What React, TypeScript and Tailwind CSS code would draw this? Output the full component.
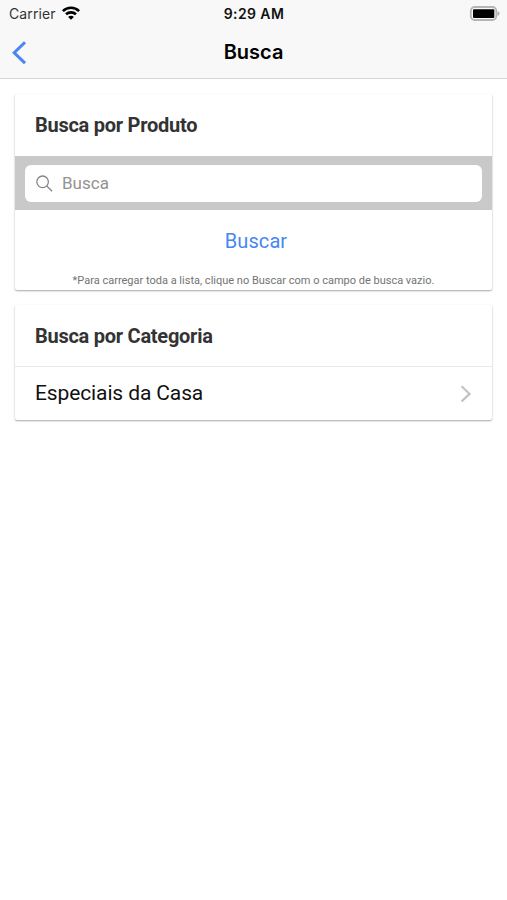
import React from "react";

function StatusBar() {
  return (
    <div className="grid h-7 grid-cols-3 items-center pl-[9px] pr-[7px] font-[Inter,sans-serif]">
      <div className="flex items-center gap-[6px]">
        <span className="text-[14px] leading-7 tracking-[0.1px] text-[#333]">Carrier</span>
        <svg width="18" height="14" viewBox="0 0 18 14" className="-mt-[2px]" fill="none" stroke="#000" strokeWidth="2.6">
          <path d="M0.9 5.1C5.4 0.7 12.6 0.7 17.1 5.1" />
          <path d="M4 8.3C6.8 5.7 11.2 5.7 14 8.3" />
          <path d="M9 13.8 6.1 10.9C7.7 9.4 10.3 9.4 11.9 10.9Z" fill="#000" stroke="none" />
        </svg>
      </div>
      <span className="-ml-px text-center text-[14px] font-semibold leading-7 tracking-[0.4px] text-[#111]">9:29 AM</span>
      <svg width="31" height="16" viewBox="0 0 31 16" className="-mt-px justify-self-end">
        <rect x="1.8" y="1" width="25.5" height="13" rx="4" fill="#f8f8f8" stroke="#b5b5b5" strokeWidth="1.8" />
        <rect x="4" y="3.2" width="21.3" height="8.8" rx="1" fill="#000" />
        <path d="M28.5 5.2C31.2 6 31.2 9 28.5 9.8Z" fill="#aaa" />
      </svg>
    </div>
  );
}

function Header() {
  return (
    <header className="h-[79px] border-b border-[#d6d6d6] bg-[#f8f8f8]">
      <StatusBar />
      <div className="grid h-12 grid-cols-[60px_1fr_60px] items-center">
        <svg width="16" height="24" viewBox="0 0 16 24" className="ml-[11px]" fill="none" stroke="#4786f5" strokeWidth="3">
          <path d="M14 2.2 3.2 12.8 14 23.2" />
        </svg>
        <h1 className="text-center font-[Inter,sans-serif] text-[20px] font-semibold leading-6 text-black">Busca</h1>
      </div>
    </header>
  );
}

function Card({ title, compact, children }: { title: string; compact?: boolean; children: React.ReactNode }) {
  return (
    <section className="overflow-hidden rounded-[2px] bg-white shadow-[0_1px_2px_rgba(0,0,0,0.35)]">
      <h2
        className={`pl-5 text-[20px] font-bold tracking-[-0.26px] text-[#333] ${
          compact ? "h-[61px] leading-[63px]" : "h-[62px] leading-[62px]"
        }`}
      >
        {title}
      </h2>
      {children}
    </section>
  );
}

export default function App() {
  return (
    <div className="min-h-screen bg-white font-[Roboto,sans-serif]">
      <Header />
      <main className="flex flex-col gap-[15px] px-[15px] pt-[15px]">
        <Card title="Busca por Produto">
          <div className="h-[54px] bg-[#c9c9c9] px-[10px] py-[8.5px]">
            <div className="flex h-[37px] items-center rounded-[6px] bg-white pl-[11px]">
              <svg width="17" height="17" viewBox="0 0 17 17" fill="none" stroke="#858585" strokeWidth="1.3">
                <circle cx="6.6" cy="6.8" r="5.8" />
                <path d="m10.8 11 5.3 5.2" />
              </svg>
              <span className="ml-[9px] text-[17px] leading-5 text-[#929292]">Busca</span>
            </div>
          </div>
          <div className="flex h-[61px] items-center justify-center pl-[5px] text-[20px] text-[#4786f5]">
            <button className="tracking-[0.1px]">Buscar</button>
          </div>
          <p className="h-[19px] text-center text-[11px] leading-[19px] text-[#737373]">
            *Para carregar toda a lista, clique no Buscar com o campo de busca vazio.
          </p>
        </Card>
        <Card title="Busca por Categoria" compact>
          <div className="flex h-[54px] items-center justify-between border-t border-[#e8e8e8] pl-5 pr-5">
            <span className="text-[21px] tracking-[-0.12px] text-[#111]">Especiais da Casa</span>
            <svg width="12" height="18" viewBox="0 0 12 18" fill="none" stroke="#c3c3c3" strokeWidth="2.2">
              <path d="m1.6 1.3 8 7.6-8 7.5" />
            </svg>
          </div>
        </Card>
      </main>
    </div>
  );
}
